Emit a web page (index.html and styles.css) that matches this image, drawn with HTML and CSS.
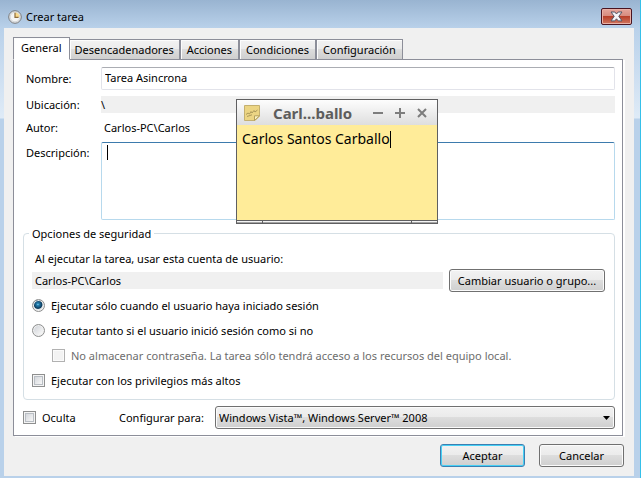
FILE: index.html
```html
<!DOCTYPE html>
<html lang="es">
<head>
<meta charset="utf-8">
<title>Crear tarea</title>
<link rel="stylesheet" href="styles.css">
</head>
<body>
<main class="window">
  <header class="titlebar">
    <svg class="clock" viewBox="0 0 14 14" width="14" height="14" aria-hidden="true">
      <circle cx="7" cy="7" r="6.3" fill="#e4e6e8" stroke="#77797c"/>
      <circle cx="7" cy="7" r="4.8" fill="#f5f5f4" stroke="#c3c6ca" stroke-width=".6"/>
      <path d="M7 7V2.4A4.6 4.6 0 0 1 11.6 7Z" fill="#f8d98c"/>
      <path d="M7 2.8V7.4H10.6" fill="none" stroke="#8c6c3c" stroke-width="1.2"/>
    </svg>
    <h1 class="title">Crear tarea</h1>
    <button class="close" type="button" aria-label="Cerrar">
      <svg viewBox="0 0 13 11" width="13" height="11" aria-hidden="true">
        <path d="M1 1H4.8L6.5 3 8.2 1H12L8.8 5.3 12 9.9H8.2L6.5 7.8 4.8 9.9H1L4.2 5.3Z" fill="#f5f5f7" stroke="#535666"/>
      </svg>
    </button>
  </header>
  <form class="client">
    <nav class="tabs">
      <button type="button" class="tab active">General</button>
      <button type="button" class="tab">Desencadenadores</button>
      <button type="button" class="tab">Acciones</button>
      <button type="button" class="tab">Condiciones</button>
      <button type="button" class="tab">Configuración</button>
    </nav>
    <section class="panel">
      <div class="fields">
        <label for="name">Nombre:</label>
        <input id="name" class="text" type="text" value="Tarea Asincrona">
        <span>Ubicación:</span>
        <span class="readonly">\</span>
        <span>Autor:</span>
        <span class="author">Carlos-PC\Carlos</span>
        <label class="top" for="description">Descripción:</label>
        <div class="description">
          <textarea id="description"></textarea>
          <i class="caret"></i>
        </div>
      </div>
      <fieldset class="group">
        <legend>Opciones de seguridad</legend>
        <p class="hint">Al ejecutar la tarea, usar esta cuenta de usuario:</p>
        <div class="account">
          <span class="readonly user">Carlos-PC\Carlos</span>
          <button type="button" class="button wide">Cambiar usuario o grupo...</button>
        </div>
        <div class="options">
          <label class="option"><input type="radio" name="session" checked>Ejecutar sólo cuando el usuario haya iniciado sesión</label>
          <label class="option"><input type="radio" name="session">Ejecutar tanto si el usuario inició sesión como si no</label>
          <label class="option nested"><input type="checkbox" disabled>No almacenar contraseña. La tarea sólo tendrá acceso a los recursos del equipo local.</label>
          <label class="option"><input type="checkbox">Ejecutar con los privilegios más altos</label>
        </div>
      </fieldset>
      <div class="configure">
        <label class="option hide"><input type="checkbox">Oculta</label>
        <label class="target-label" for="target">Configurar para:</label>
        <div class="target">
          <select id="target"><option>Windows Vista™, Windows Server™ 2008</option></select>
          <svg class="arrow" viewBox="0 0 7 4" width="7" height="4" aria-hidden="true"><path d="M0 0H7L3.5 4Z"/></svg>
        </div>
      </div>
    </section>
    <footer class="actions">
      <button type="button" class="button default">Aceptar</button>
      <button type="button" class="button">Cancelar</button>
    </footer>
  </form>
</main>
<aside class="note">
  <header class="note-bar">
    <svg viewBox="0 0 16 16" width="16" height="16" aria-hidden="true">
      <path d="M.5 .5H15.5V11L11 15.5H.5Z" fill="#ecd584" stroke="#c4b070"/>
      <path d="M10.5 15.5V10.8H15.5Z" fill="#fbf2c2" stroke="#b5a05c"/>
      <path d="M2 9.5L4 8 5.5 9 7 6.5 8 8 10 5.5 11 7 13.5 5M3 11.5L8 9.8" fill="none" stroke="#9c8a50" stroke-width=".8"/>
    </svg>
    <strong class="note-title">Carl...ballo</strong>
    <button type="button" aria-label="Minimizar"><svg viewBox="0 0 10 10" width="10" height="10"><path d="M0 5H10"/></svg></button>
    <button type="button" aria-label="Maximizar"><svg viewBox="0 0 10 10" width="10" height="10"><path d="M0 5H10M5 0V10"/></svg></button>
    <button type="button" aria-label="Cerrar nota"><svg viewBox="0 0 10 10" width="10" height="10"><path d="M1 1L9 9M9 1L1 9"/></svg></button>
  </header>
  <p class="note-text">Carlos Santos Carballo<i class="caret"></i></p>
  <div class="grip"><i></i><i></i><i></i></div>
</aside>
</body>
</html>
```
FILE: styles.css
```css
* { box-sizing: border-box; }

body {
  margin: 0;
  font: 11px/17px "Noto Sans", "Open Sans", sans-serif;
  color: #000;
}

button, input, select, textarea { font: inherit; color: inherit; margin: 0; }

.window {
  min-height: 100vh;
  display: flex;
  flex-direction: column;
  padding: 0 6px 2px 4px;
  border-right: 1px solid #35c0ea;
  background: linear-gradient(#99b4d1 0, #b9d1ea 28px, #dfebf7 118px, #b9d1ea 119px);
}

.titlebar {
  height: 28px;
  display: flex;
  align-items: center;
  gap: 4px;
  padding: 5px 2px 0 4px;
}

.title { flex: 1; margin: 0; font-size: 11px; font-weight: 400; }

.close {
  display: grid;
  place-items: center;
  width: 31px;
  height: 17px;
  padding: 0;
  border: 1px solid #4a1420;
  border-radius: 2px;
  box-shadow: inset 0 0 0 1px #e9b0a6;
  background: linear-gradient(#e5a59b, #d68a7d 48%, #b8402a 50%, #d0765f);
}

.client {
  flex: 1;
  padding: 9px 10px 9px 9px;
  background: #f0f0f0;
}

.tabs { display: flex; align-items: flex-end; height: 23px; }

.tab {
  height: 21px;
  padding: 0 6px;
  border: 1px solid #8c8e99;
  box-shadow: inset 1px 1px #fcfcfc;
  background: linear-gradient(#f2f2f2, #ebebeb 48%, #dddddd 50%, #cfcfcf);
}

.tab.active {
  position: relative;
  z-index: 1;
  height: 23px;
  padding: 0 7px 3px;
  border-bottom-color: #fff;
  background: #fff;
}

.tab.active + .tab { border-left-width: 0; padding: 0 5px; }

.panel {
  margin: -1px 1px 0 0;
  padding: 7px 7px 6px 9px;
  border: 1px solid #8c8e99;
  background: #fff;
  box-shadow: 2px 1px #fff;
}

.fields {
  display: grid;
  grid-template-columns: 75px 1fr;
  gap: 6px 0;
  align-items: center;
  padding-left: 3px;
}

.text {
  width: 100%;
  height: 23px;
  padding: 0 3px 2px;
  border: 1px solid #e2e3ea;
  border-top-color: #abadb3;
  border-radius: 2px;
}

.readonly { height: 17px; background: #f0f0f0; }
.author { padding-left: 3px; }
.top { align-self: start; padding-top: 2px; }

.description { position: relative; height: 78px; }

.description textarea {
  display: block;
  width: 100%;
  height: 100%;
  resize: none;
  border: 1px solid #b7d9ed;
  border-top-color: #3d7bad;
  border-radius: 2px;
}

.caret { display: inline-block; width: 1px; background: #000; }
.description .caret { position: absolute; left: 6px; top: 3px; height: 15px; }

.group {
  min-width: 0;
  margin: 5px 0 0;
  padding: 8px 9px 10px 8px;
  border: 1px solid #d5dfe5;
  border-radius: 4px;
}

.group legend { padding: 0 3px; margin-left: -3px; }

.hint { margin: 0 0 2px; padding-left: 3px; }

.account { display: flex; align-items: center; gap: 6px; }
.user { flex: 1; padding-left: 3px; }

.button {
  width: 85px;
  height: 23px;
  padding: 0;
  border: 1px solid #707070;
  border-radius: 3px;
  box-shadow: inset 0 0 0 1px #fbfbfb;
  background: linear-gradient(#f2f2f2, #ebebeb 48%, #dddddd 50%, #cfcfcf);
}

.button.wide { width: 156px; }
.button.default { border-color: #3c7fb1; box-shadow: inset 0 0 0 1px #47d0f5; }

.options { display: grid; gap: 8px; padding-top: 5px; }

.option { display: flex; align-items: center; gap: 6px; white-space: nowrap; }
.nested { padding-left: 20px; color: #6d6d6d; }

.option input {
  flex: none;
  appearance: none;
  width: 13px;
  height: 13px;
  border: 1px solid #8e8f8f;
  box-shadow: inset 0 0 0 1px #f4f4f4, inset 0 0 0 2px #b9bec4;
  background: linear-gradient(135deg, #cbcfd5, #f6f6f6 80%);
}

.option input[type="radio"] {
  border-radius: 50%;
  box-shadow: inset 0 0 0 1px #f0f0f0;
}

.option input:checked {
  background: radial-gradient(circle at 45% 40%, #8fdcf8 0, #2a87b8 1px, #0b3a5c 4px, #dfe3e6 5px);
}

.option input:disabled { border-color: #b1b1b1; box-shadow: inset 0 0 0 1px #fbfbfb; background: #f3f3f3; }

.configure { display: flex; align-items: center; margin-top: 6px; }
.hide { width: 96px; }
.target-label { width: 96px; }
.target { position: relative; flex: 1; }

.target select {
  display: block;
  appearance: none;
  width: 100%;
  height: 23px;
  padding: 0 3px;
  border: 1px solid #707070;
  border-radius: 3px;
  box-shadow: inset 0 0 0 1px #fbfbfb;
  background: linear-gradient(#f2f2f2, #ebebeb 48%, #dddddd 50%, #cfcfcf);
}

.arrow { position: absolute; right: 5px; top: 10px; pointer-events: none; }

.actions { display: flex; justify-content: flex-end; gap: 14px; padding-top: 8px; }

.note {
  position: absolute;
  left: 236px;
  top: 99px;
  width: 202px;
  border: 1px solid #5f5f61;
  background: #ffec99;
  font: 14px/20px "Noto Sans", "Open Sans", sans-serif;
}

.note-bar {
  display: flex;
  align-items: center;
  gap: 12px;
  height: 25px;
  padding: 0 10px 0 7px;
  background: linear-gradient(#fdfdfd, #dedede);
}

.note-title { flex: 1; padding-left: 1px; font-size: 15px; color: #5d5d5d; }

.note-bar button { display: block; padding: 0; border: 0; background: none; }
.note-bar button svg { display: block; fill: none; stroke: #7d7d7d; stroke-width: 2; }

.note-text { margin: 0; height: 95px; padding: 4px 5px; white-space: nowrap; }
.note-text .caret { height: 17px; vertical-align: -4px; }

.grip { display: grid; grid-template-columns: 25px 1fr 25px; gap: 1px; padding-top: 1px; background: #5f5f61; }
.grip i { height: 2px; border-top: 1px solid #f4f4f4; background: #a5a5a5; }
```
